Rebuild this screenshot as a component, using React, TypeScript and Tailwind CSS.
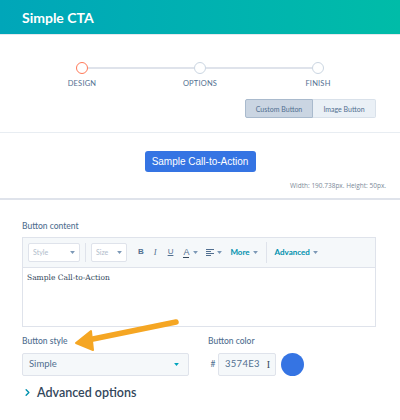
import { ChevronRight } from 'lucide-react';

function Caret({ className = '' }: { className?: string }) {
  return (
    <svg viewBox="0 0 8 5" className={`h-[3px] w-[5px] ${className}`}>
      <path d="M0 0 L8 0 L4 5 Z" fill="currentColor" />
    </svg>
  );
}

function Step({ active }: { active?: boolean }) {
  return (
    <div
      className={`h-[12px] w-[12px] shrink-0 rounded-full border-[1.5px] bg-white ${
        active ? 'border-[#ff7a59]' : 'border-[#cbd6e2]'
      }`}
    />
  );
}

export default function App() {
  return (
    <div className="relative h-[420px] w-[400px] overflow-hidden bg-white font-['Lato',sans-serif] text-[#33475b]">
      {/* Header */}
      <div className="flex h-[35px] items-center border-b border-[#e5e8ed] bg-linear-to-r from-[#00a6b9] to-[#00bca8] pl-[22px]">
        <h1 className="text-[14px] font-bold text-white">Simple CTA</h1>
      </div>

      {/* Stepper */}
      <div className="border-b border-[#e8edf2] pb-[14px] pt-[27px]">
        <div className="ml-[23px] w-[354px]">
          <div className="flex items-center px-[53px]">
            <Step active />
            <div className="h-[2px] flex-1 bg-[#dfe3eb]" />
            <Step />
            <div className="h-[2px] flex-1 bg-[#dfe3eb]" />
            <Step />
          </div>
          <div className="mt-[4px] grid grid-cols-3 text-center text-[7.5px] tracking-[0.2px] text-[#516f90]">
            <span>DESIGN</span>
            <span>OPTIONS</span>
            <span>FINISH</span>
          </div>
        </div>
        <div className="mt-[10px] flex justify-end pr-[24px] text-[7px] text-[#516f90]">
          <button className="h-[19px] w-[68px] rounded-l-[2px] border border-[#a9bacd] bg-[#cad5e2]">
            Custom Button
          </button>
          <button className="h-[19px] w-[63px] rounded-r-[2px] border border-l-0 border-[#d9e1ea] bg-[#eaf0f6]">
            Image Button
          </button>
        </div>
      </div>

      {/* Preview */}
      <div className="border-b-2 border-[#dfe3eb] pb-[7px] pt-[18px]">
        <div className="flex justify-center">
          <button className="h-[21px] w-[111px] rounded-[3px] bg-[#3574e3] font-['Liberation_Sans',sans-serif] text-[10px] text-white">
            Sample Call-to-Action
          </button>
        </div>
        <p className="mt-[9px] pr-[14px] text-right font-['Open_Sans',sans-serif] text-[6.5px] text-[#7c8a99]">
          Width: 190.738px. Height: 50px.
        </p>
      </div>

      {/* Form */}
      <div className="px-[22px] pr-[24px] pt-[20px]">
        <label className="block text-[8.5px] font-medium text-[#516f90]">Button content</label>
        <div className="mt-[4px] border border-[#dfe3eb]">
          <div className="flex h-[30px] items-center border-b border-[#dfe3eb] bg-[#f5f8fa] pl-[5px] text-[#516f90]">
            <div className="flex h-[19px] w-[52px] items-center justify-between rounded-[2px] border border-[#dfe3eb] bg-white px-[4px]">
              <span className="text-[7px] text-[#b0bccb]">Style</span>
              <Caret className="text-[#7c98b6]" />
            </div>
            <div className="mx-[5px] h-[19px] w-[1px] bg-[#dfe3eb]" />
            <div className="flex h-[19px] w-[36px] items-center justify-between rounded-[2px] border border-[#dfe3eb] bg-white px-[4px]">
              <span className="text-[7px] text-[#b0bccb]">Size</span>
              <Caret className="text-[#7c98b6]" />
            </div>
            <span className="ml-[11px] font-['Liberation_Sans',sans-serif] text-[8px] font-bold">B</span>
            <span className="ml-[10px] font-['Liberation_Serif',serif] text-[8.5px] italic">I</span>
            <span className="ml-[11px] font-['Liberation_Sans',sans-serif] text-[8px] underline">U</span>
            <span className="ml-[10px] flex items-center gap-[4px]">
              <span className="border-b-[1.5px] border-[#33475b] font-['Liberation_Sans',sans-serif] text-[9px] leading-[10px]">A</span>
              <Caret className="text-[#7c98b6]" />
            </span>
            <span className="ml-[8px] flex items-center gap-[3px]">
              <svg viewBox="0 0 8 7" className="h-[7px] w-[8px]">
                <path d="M0 0.5h8M0 2.5h5M0 4.5h8M0 6.5h5" stroke="#516f90" strokeWidth="1" />
              </svg>
              <Caret className="text-[#7c98b6]" />
            </span>
            <span className="ml-[8px] flex items-center gap-[3px] text-[8px] font-bold text-[#0091ae]">
              More
              <Caret className="text-[#7c98b6]" />
            </span>
            <div className="ml-[8px] h-[21px] w-[1px] bg-[#dfe3eb]" />
            <span className="ml-[8px] flex items-center gap-[3px] text-[8px] font-bold text-[#0091ae]">
              Advanced
              <Caret className="text-[#7c98b6]" />
            </span>
          </div>
          <div className="h-[58px] bg-white px-[4px] pt-[4px] font-['DejaVu_Serif',serif] text-[7.5px] text-[#33475b]">
            Sample Call-to-Action
          </div>
        </div>

        <div className="mt-[8px] flex gap-[19px]">
          <div>
            <label className="block text-[8.5px] font-medium text-[#516f90]">Button style</label>
            <div className="mt-[5px] flex h-[23px] w-[167px] items-center justify-between rounded-[2px] border border-[#dfe3eb] bg-[#f5f8fa] pl-[6px] pr-[9px]">
              <span className="text-[9.5px] text-[#516f90]">Simple</span>
              <Caret className="text-[#00a4bd]" />
            </div>
          </div>
          <div>
            <label className="block text-[8.5px] font-medium text-[#516f90]">Button color</label>
            <div className="mt-[5px] flex items-center">
              <span className="w-[10px] text-center text-[8.5px] text-[#516f90]">#</span>
              <div className="flex h-[23px] w-[58px] items-center justify-between rounded-[2px] border border-[#dfe3eb] bg-[#f5f8fa] pl-[6px] pr-[5px]">
                <span className="text-[9.5px] tracking-[0.3px] text-[#516f90]">3574E3</span>
                <span className="font-['Liberation_Serif',serif] text-[10px] text-[#33475b]">I</span>
              </div>
              <div className="ml-[5px] h-[23px] w-[23px] rounded-full bg-[#3574e3]" />
            </div>
          </div>
        </div>

        <div className="mt-[8px] flex items-center gap-[4px]">
          <ChevronRight className="h-[11px] w-[11px] text-[#0091ae]" strokeWidth={3} />
          <span className="text-[12.5px] font-semibold text-[#33475b]">Advanced options</span>
        </div>
      </div>

      {/* Annotation arrow */}
      <svg className="pointer-events-none absolute left-0 top-0" width="400" height="420">
        <line x1="176" y1="322" x2="88" y2="340" stroke="#f5a623" strokeWidth="5.5" strokeLinecap="round" />
        <path d="M76 343 L91 331 L93 350 Z" fill="#f5a623" stroke="#f5a623" strokeWidth="2" strokeLinejoin="round" />
      </svg>
    </div>
  );
}
